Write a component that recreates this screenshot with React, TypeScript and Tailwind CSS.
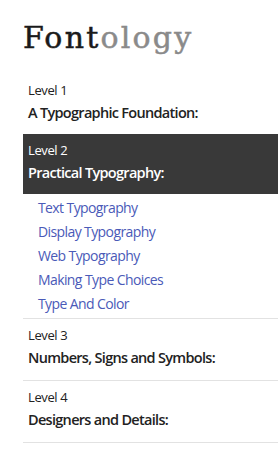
// Fontology course navigation sidebar

const subItems = [
  'Text Typography',
  'Display Typography',
  'Web Typography',
  'Making Type Choices',
  'Type And Color',
];

interface LevelProps {
  level: string;
  title: string;
  active?: boolean;
  border?: boolean;
}

const LevelBlock: React.FC<LevelProps> = ({ level, title, active, border }) => {
  return (
    <div
      className={
        active
          ? 'bg-[#393939] text-white pl-[5px] pt-[6px] pb-[8px]'
          : border
          ? 'text-[#222] pl-[5px] pt-[6px] pb-[9px] border-b border-[#e2e2e2]'
          : 'text-[#222] pl-[5px] pt-[6px] pb-[8px]'
      }
    >
      <div className="text-[13px] leading-[20px] tracking-[-0.4px]">{level}</div>
      <div className="text-[14.5px] leading-[26px] font-semibold tracking-[-0.7px]">{title}</div>
    </div>
  );
};

export default function App() {
  return (
    <div className="w-[278px] h-[457px] bg-white overflow-hidden pl-[23px] font-['Open_Sans',sans-serif]">
      {/* logo */}
      <div className="pt-[20px] h-[74px] text-[30px] leading-[36px] tracking-[2.2px] font-['DejaVu_Serif',serif] [-webkit-text-stroke:0.5px]">
        <span className="text-[#1a1a1a]">Font</span>
        <span className="text-[#8a8a8a]">ology</span>
      </div>

      <LevelBlock level="Level 1" title="A Typographic Foundation:" />
      <LevelBlock level="Level 2" title="Practical Typography:" active />

      {/* sub items */}
      <div className="pl-[15px] pt-[2px] pb-[2px] border-b border-[#e2e2e2]">
        {subItems.map((item) => (
          <div key={item} className="text-[14px] leading-[24px] tracking-[-0.6px] text-[#4a5ab8]">
            {item}
          </div>
        ))}
      </div>

      <LevelBlock level="Level 3" title="Numbers, Signs and Symbols:" border />
      <LevelBlock level="Level 4" title="Designers and Details:" border />
    </div>
  );
}
